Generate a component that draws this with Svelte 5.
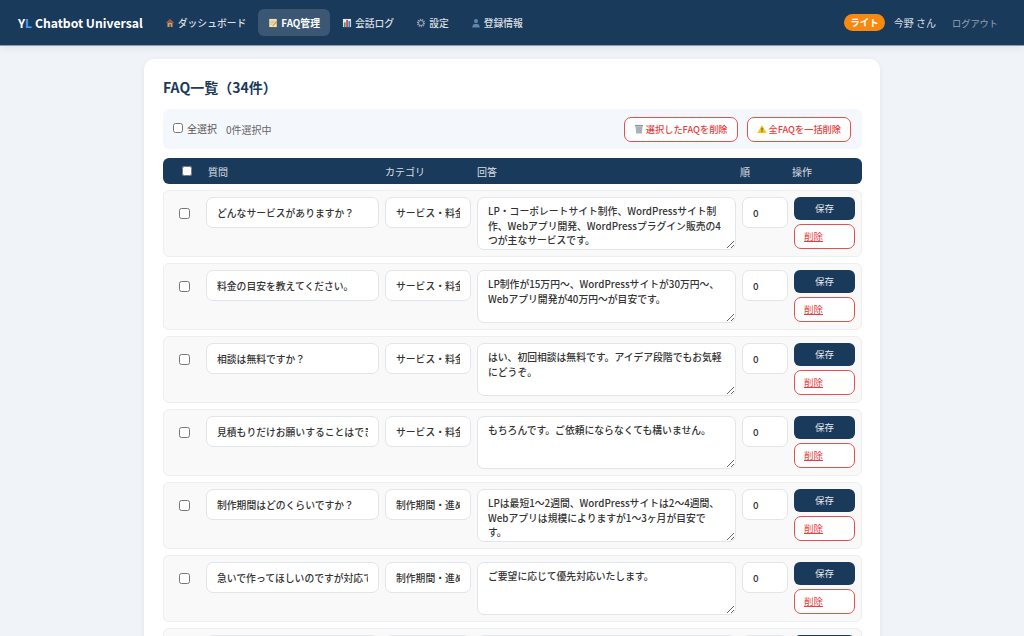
<script>
  const navItems = [
    { label: 'ダッシュボード', icon: 'home' },
    { label: 'FAQ管理', icon: 'memo', active: true },
    { label: '会話ログ', icon: 'chart' },
    { label: '設定', icon: 'gear' },
    { label: '登録情報', icon: 'user' }
  ];

  const faqs = [
    { q: 'どんなサービスがありますか？', cat: 'サービス・料金', a: 'LP・コーポレートサイト制作、WordPressサイト制作、Webアプリ開発、WordPressプラグイン販売の4つが主なサービスです。' },
    { q: '料金の目安を教えてください。', cat: 'サービス・料金', a: 'LP制作が15万円〜、WordPressサイトが30万円〜、Webアプリ開発が40万円〜が目安です。' },
    { q: '相談は無料ですか？', cat: 'サービス・料金', a: 'はい、初回相談は無料です。アイデア段階でもお気軽にどうぞ。' },
    { q: '見積もりだけお願いすることはできますか？', cat: 'サービス・料金', a: 'もちろんです。ご依頼にならなくても構いません。' },
    { q: '制作期間はどのくらいですか？', cat: '制作期間・進め方', a: 'LPは最短1〜2週間、WordPressサイトは2〜4週間、Webアプリは規模によりますが1〜3ヶ月が目安で\nす。' },
    { q: '急いで作ってほしいのですが対応できますか？', cat: '制作期間・進め方', a: 'ご要望に応じて優先対応いたします。' }
  ];
</script>

<header class="topbar">
  <div class="brand">Y<span class="brand-l">L</span> Chatbot Universal</div>
  <nav class="nav">
    {#each navItems as item}
      <a class="nav-item" class:active={item.active} href="#top">
        <svg class="ico" viewBox="0 0 16 16">
          {#if item.icon === 'home'}
            <path d="M8 2 2 8h2v6.500h8V8h2z" fill="#c9a36f" />
            <path d="M8 1.500 1.500 8h13z" fill="#a8533f" />
            <rect x="7" y="10" width="2.400" height="4.500" fill="#6b4a32" />
          {:else if item.icon === 'memo'}
            <rect x="2" y="1.500" width="12" height="13" fill="#f3e6b4" />
            <path d="M4 5h7M4 7.500h6M4 10h3" stroke="#9a9a8a" stroke-width=".8" />
            <path d="m7.500 11.500 6-7 1.500 1.300-6 7-2 .7z" fill="#e0962f" />
          {:else if item.icon === 'chart'}
            <rect x="1.500" y="1.500" width="13" height="13" fill="#e4eaf0" />
            <rect x="3" y="7" width="2.800" height="7.500" fill="#3f9b57" />
            <rect x="6.700" y="3" width="2.800" height="11.500" fill="#d0473f" />
            <rect x="10.300" y="5" width="2.800" height="9.500" fill="#3a78c9" />
          {:else if item.icon === 'gear'}
            <circle cx="8" cy="8" r="5.400" fill="none" stroke="#8d98a5" stroke-width="2.600" stroke-dasharray="2 1.300" />
            <circle cx="8" cy="8" r="4" fill="none" stroke="#9aa4b0" stroke-width="1.600" />
          {:else}
            <circle cx="8" cy="4.800" r="3.300" fill="#5f86ad" />
            <path d="M2 15c0-4.500 2.800-6 6-6s6 1.500 6 6z" fill="#5f86ad" />
          {/if}
        </svg>
        {item.label}
      </a>
    {/each}
  </nav>
  <div class="account">
    <span class="plan">ライト</span>
    <span class="user">今野 さん</span>
    <a class="logout" href="#top">ログアウト</a>
  </div>
</header>

<main class="page">
  <section class="card">
    <h2>FAQ一覧（34件）</h2>

    <div class="toolbar">
      <label class="select-all"><input type="checkbox" /> 全選択</label>
      <span class="count">0件選択中</span>
      <div class="bulk">
        <button class="btn-outline">
          <svg class="ico" viewBox="0 0 16 16">
            <rect x="1.500" y="1.500" width="13" height="2.500" fill="#8b939b" />
            <path d="M2.500 4.500h11l-1 10.500h-9z" fill="#a9b0b7" />
          </svg>
          選択したFAQを削除
        </button>
        <button class="btn-outline">
          <svg class="ico" viewBox="0 0 16 16">
            <path d="M8 1.500 15.500 14.500H.5z" fill="#f5c518" />
            <path d="M8 6v4.500M8 11.600v1.400" stroke="#333" stroke-width="1.400" />
          </svg>
          全FAQを一括削除
        </button>
      </div>
    </div>

    <div class="thead">
      <span class="th-check"><input type="checkbox" /></span>
      <span>質問</span>
      <span>カテゴリ</span>
      <span>回答</span>
      <span>順</span>
      <span>操作</span>
    </div>

    {#each faqs as faq}
      <div class="row">
        <span class="row-check"><input type="checkbox" /></span>
        <input class="field" type="text" value={faq.q} />
        <input class="field" type="text" value={faq.cat} />
        <textarea class="field answer" value={faq.a}></textarea>
        <input class="field" type="text" value="0" />
        <div class="ops">
          <button class="btn-save">保存</button>
          <button class="btn-delete"><u>削除</u></button>
        </div>
      </div>
    {/each}
    <div class="row">
      <span class="row-check"></span>
      <span class="field"></span>
      <span class="field"></span>
      <span class="field answer"></span>
      <span class="field"></span>
      <div class="ops"><span class="btn-save stub"></span></div>
    </div>
  </section>
</main>

<style>
  :global(html), :global(body) {
    margin: 0;
    height: 100%;
    overflow: hidden;
  }

  :global(body) {
    background: #f0f3f8;
    font-family: "Noto Sans CJK JP", "Noto Sans", sans-serif;
    color: #333;
  }

  .topbar {
    display: flex;
    align-items: center;
    height: 46px;
    padding: 0 26px 0 18px;
    background: #1a3a5c;
    box-sizing: border-box;
    border-bottom: 1px solid #8c9bac;
    box-shadow: 0 2px 8px rgba(0, 0, 0, 0.07);
  }

  .brand {
    font-size: 12.200px;
    font-weight: 700;
    color: #fff;
    margin-right: 12px;
    white-space: nowrap;
  }

  .brand-l {
    color: #4a9eff;
  }

  .nav {
    display: flex;
    align-items: center;
    gap: 2px;
  }

  .nav-item {
    display: flex;
    align-items: center;
    gap: 3px;
    height: 27px;
    padding: 0 10px;
    border-radius: 6px;
    font-size: 9.800px;
    font-weight: 500;
    color: rgba(255, 255, 255, 0.85);
    text-decoration: none;
    white-space: nowrap;
  }

  .nav-item.active {
    background: rgba(255, 255, 255, 0.15);
    color: #fff;
    font-weight: 700;
  }

  .ico {
    width: 10px;
    height: 10px;
    flex: none;
  }

  .account {
    display: flex;
    align-items: center;
    margin-left: auto;
  }

  .plan {
    background: #f6890f;
    color: #fff;
    font-size: 9.500px;
    font-weight: 700;
    padding: 0 6px;
    height: 17px;
    line-height: 17px;
    border-radius: 9px;
    margin-right: 9px;
  }

  .user {
    font-size: 10px;
    color: rgba(255, 255, 255, 0.85);
    margin-right: 16px;
  }

  .logout {
    font-size: 9.200px;
    color: rgba(255, 255, 255, 0.55);
    text-decoration: none;
  }

  .page {
    width: 736px;
    margin: 13px 0 0 144px;
  }

  .card {
    background: #fff;
    border-radius: 10px;
    padding: 18px 18px 24px 19px;
    box-shadow: 0 1px 6px rgba(0, 0, 0, 0.06);
  }

  h2 {
    margin: 0 0 12px;
    font-size: 14px;
    line-height: 20px;
    font-weight: 700;
    color: #1a3a5c;
  }

  .toolbar {
    display: flex;
    align-items: center;
    height: 40px;
    padding: 0 11px 0 10px;
    background: #f4f7fb;
    border-radius: 6px;
    margin-bottom: 9px;
  }

  .select-all {
    display: flex;
    align-items: center;
    gap: 4px;
    font-size: 10px;
    color: #555;
    margin-right: 9px;
    margin-top: -2px;
  }

  .select-all input {
    margin: 0;
    width: 10px;
    height: 10px;
  }

  .count {
    font-size: 10px;
    color: #666;
  }

  .bulk {
    display: flex;
    gap: 9px;
    margin-left: auto;
  }

  .btn-outline {
    display: flex;
    align-items: center;
    gap: 2px;
    height: 25px;
    padding: 0 9px 1px;
    background: #fff;
    border: 1.500px solid #e25050;
    border-radius: 7px;
    color: #e53e3e;
    font-family: inherit;
    font-size: 9.200px;
    font-weight: 500;
    white-space: nowrap;
  }

  .thead {
    display: grid;
    grid-template-columns: 36px 173px 86px 259px 46px 1fr;
    column-gap: 6px;
    align-items: center;
    height: 26px;
    background: #1a3a5c;
    border-radius: 6px;
    margin-bottom: 6px;
    font-size: 10px;
    color: rgba(255, 255, 255, 0.85);
  }

  .thead > span:nth-child(2) { padding-left: 3px; }
  .thead > span:nth-child(3) { padding-left: 1px; }
  .thead > span:nth-child(4) { padding-left: 1px; }
  .thead > span:nth-child(5) { margin-left: -1px; }
  .thead > span:nth-child(6) { margin-left: -1px; }

  .th-check {
    display: flex;
    justify-content: flex-end;
    padding-right: 7px;
  }

  .th-check input {
    margin: 0;
    width: 10px;
    height: 10px;
  }

  .row {
    display: grid;
    grid-template-columns: 36px 173px 86px 259px 46px 61px;
    column-gap: 6px;
    align-items: start;
    height: 67px;
    box-sizing: border-box;
    padding-top: 6px;
    margin-bottom: 6px;
    background: #f9f9f9;
    border: 1px solid #eeeeee;
    border-radius: 6px;
  }

  .row-check {
    display: flex;
    justify-content: flex-end;
    padding: 11px 10px 0 0;
  }

  .row-check input {
    margin: 0;
    width: 11px;
    height: 11px;
  }

  .field {
    box-sizing: border-box;
    width: 100%;
    height: 31px;
    padding: 0 10px;
    background: #fff;
    border: 1px solid #e2e5e9;
    border-radius: 7px;
    font-family: inherit;
    font-size: 9.800px;
    font-weight: 500;
    color: #333;
    outline: none;
  }

  .answer {
    height: 53px;
    padding: 6px 10px;
    line-height: 14.500px;
    resize: vertical;
    overflow: hidden;
  }

  .ops {
    display: flex;
    flex-direction: column;
    gap: 4px;
  }

  .btn-save,
  .btn-delete {
    height: 23px;
    border-radius: 6px;
    font-family: inherit;
    font-size: 9.500px;
    padding: 0 0 2px;
  }

  .btn-save {
    background: #1a3a5c;
    border: none;
    color: rgba(255, 255, 255, 0.9);
  }

  .stub {
    display: block;
  }

  .btn-delete {
    height: 25px;
    background: #fff;
    border: 1.500px solid #e25050;
    border-radius: 7px;
    color: #e53e3e;
    text-align: left;
    padding: 0 0 1px 9px;
  }
</style>
